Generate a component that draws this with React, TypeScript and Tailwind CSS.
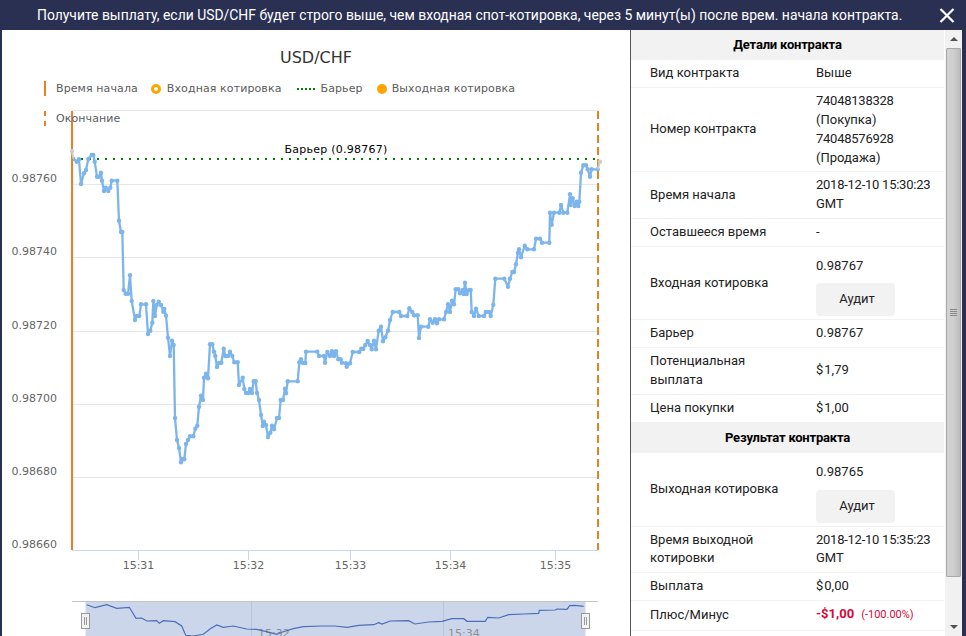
import React from 'react';

// page coordinates, read off the price line
const PRICE: [number, number][] = [
  [73.3,158.7],[76.7,161.7],[79,159.3],[81,184],[84,173.3],[86,170],[88.3,159],[91.7,155],[93.3,155],[94.7,161.7],[97,176.7],[99,176.7],[101,172.7],[102,180.7],[104,191],[105.7,187.7],[108.3,191],[110.3,187.7],[111.7,180.7],[117.3,180.7],[119,220.7],[121,232],[122.3,232],[123.7,290],[125.7,293.7],[128,293.7],[130,275.3],[131.7,301],[135,320],[136.7,316],[139.3,316],[141,304.3],[146,304.3],[148,334],[150.3,330.7],[152.3,322.7],[153.3,301],[155,316],[156.7,305],[158.7,301.7],[161,305],[163.3,311.7],[164.3,309],[166,315.7],[168,337.7],[170,356],[172,340.7],[173.7,345],[175,418],[177,440],[179,448],[181,462.3],[182.3,459.3],[184.3,459.3],[186,444],[188,440],[190,436.3],[193.3,436.3],[195.3,428.7],[197.3,425.7],[199,406.7],[201,395.7],[203,400],[204,377.7],[206,373.7],[208,378.3],[210,344.3],[212.3,344.3],[214,351.7],[215.3,356],[217,367],[219,363],[221.3,362.7],[223.7,348.7],[225.3,356],[228,356],[230,351.7],[232.3,356],[234.3,362.3],[237.7,362.3],[239,385],[242.7,377.7],[244.3,389],[246,393],[248.3,393],[250,389],[252,393],[253.7,381.3],[255.7,381.3],[257,393],[259,400],[261,415],[262.7,426],[264,421.7],[266,425],[268,437],[270.3,432.7],[272,425.7],[274,429.3],[277,418],[279,418],[280.7,400],[283,400],[285,388.7],[286,393.3],[287.7,381.3],[297.7,381.3],[299.3,362.3],[301,359.3],[303,363],[305.3,363],[306,351.7],[317.3,351.7],[319,356],[324,356],[325,362.7],[327.3,352],[330,356],[332,351.3],[334,356],[336,351.3],[338.3,359.3],[340.7,359.3],[342,362.7],[346,363.3],[346.7,366.7],[350,363.3],[352.7,352],[359.3,352],[361.3,348.7],[363.3,348.7],[365.3,345],[367.7,341],[370,345],[371.7,349.3],[374,340.7],[376,349.3],[378.7,330.7],[381,326.7],[383,341.3],[385.3,337.3],[388,330.7],[390,320],[392.7,312],[399.3,312],[401,316],[407.3,316],[409.3,308.3],[412.3,312],[414,315.3],[417.7,315.3],[419,338],[421,326.7],[428.3,326.7],[430,319.3],[432.7,322.7],[435,319.3],[437,323.3],[439,319.3],[444,319.3],[446,312],[448,304.3],[450,312],[452,300.7],[454,304.3],[455.7,289.3],[458.3,289.3],[460,293.3],[462.7,290],[463.7,294],[465,282.7],[466.7,294],[469,290],[470.7,290],[471.7,312],[474,316],[476,308.7],[478.7,316],[484,316],[485.7,312],[489,312],[490.7,316],[493.3,304.7],[495.3,278.7],[504.3,278.7],[508,286.7],[510,278.7],[512.3,272],[514,272],[516,264.3],[518,252.7],[519,249.3],[521,257.3],[524.7,245.7],[527.3,249.3],[534,249.3],[536,238.7],[540,238.7],[542,242.7],[549.3,242.7],[550,212.7],[551.7,224.7],[554,212.7],[559.3,212.7],[561,205],[563.3,212.7],[567.3,212.7],[570,194.3],[570.7,205],[572.7,198.3],[574.7,206],[576.7,201.7],[578.3,206],[579.3,201.7],[581,172.7],[583.3,165.3],[586,165.3],[587.7,169.3],[590,176.7],[591.7,169.3],[597.7,169.3],
];

const NAVIGATOR =
  '86.7,604.7 95,607.7 106.7,604.7 116.7,608.3 129.3,607.3 136,618.3 141.7,618 146.7,621 156.7,620.7 159.3,623.3 163.3,620.7 175,621.7 181.7,626 185.7,635.3 193,636 203.3,634.3 210,629 216.7,625 223.3,627.3 233.3,626 246.7,629 256.7,629.3 266.7,631.7 276.7,634.3 283.3,631.7 293.3,628.7 303.3,626.7 322,626 335,626 347,627.3 358.7,625.3 373.7,624.7 378.7,622.7 382,624 390.3,621 408.7,620.7 414.7,624 428.7,622 442,621.3 452,618.7 463.7,618.7 467,621.3 485.3,621.3 487.7,617.3 498.7,618 508.7,614.7 523.7,614 538.7,613.3 539.3,610.3 555.3,610 557,609 567,609.3 569.7,605.7 575.3,605.3 583.7,606.3';

const GRID = [110.5, 184.5, 257.5, 331.5, 404.5, 477.5];
const Y_LABELS: [string, number][] = [
  ['0.98760', 182],
  ['0.98740', 255],
  ['0.98720', 329],
  ['0.98700', 402],
  ['0.98680', 475],
  ['0.98660', 548],
];
const X_TICKS: [string, number][] = [
  ['15:31', 138.5],
  ['15:32', 248.5],
  ['15:33', 350.5],
  ['15:34', 450.5],
  ['15:35', 555.5],
];

const chartFont = { fontFamily: '"DejaVu Sans", sans-serif' };

const Chart = () => (
  <svg className="block" width={628} height={530} viewBox="2 106 628 530" style={chartFont}>
    {GRID.map((y) => (
      <line key={y} x1={72} x2={598} y1={y} y2={y} stroke="#e6e6e6" />
    ))}
    {Y_LABELS.map(([t, y]) => (
      <text key={t} x={57} y={y} textAnchor="end" fontSize={11} fill="#666666">{t}</text>
    ))}
    <line x1={72} x2={598} y1={550.5} y2={550.5} stroke="#ccd6eb" />
    {X_TICKS.map(([t, x]) => (
      <g key={t}>
        <line x1={x} x2={x} y1={550} y2={560} stroke="#ccd6eb" />
        <text x={x} y={569} textAnchor="middle" fontSize={11} fill="#666666">{t}</text>
      </g>
    ))}

    {/* barrier */}
    <line x1={73} x2={598} y1={159} y2={159} stroke="#008000" strokeWidth={2} strokeDasharray="2 6" />
    <text x={336} y={153} textAnchor="middle" fontSize={11} letterSpacing={0.25} fill="#000000">Барьер (0.98767)</text>

    {/* price */}
    <polyline points={PRICE.map((p) => p.join(',')).join(' ')} fill="none" stroke="#7cb5ec" strokeWidth={2.3} strokeLinejoin="round" />
    {PRICE.map(([x, y], i) => (
      <circle key={i} cx={x} cy={y} r={2.2} fill="#7cb5ec" />
    ))}

    {/* start, end */}
    <line x1={72} x2={72} y1={111} y2={550} stroke="#e98024" strokeWidth={2} />
    <line x1={598} x2={598} y1={111} y2={550} stroke="#e98024" strokeWidth={2} strokeDasharray="8 4" />

    {/* grey ends sit over the markers */}
    <polyline points="72,151 73.3,158.7" fill="none" stroke="#cccccc" strokeWidth={2} />
    <polyline points="597.7,169.3 600,161.7" fill="none" stroke="#cccccc" strokeWidth={2} />
    <circle cx={72} cy={151} r={2.2} fill="#cccccc" />
    <circle cx={600} cy={161.7} r={2.2} fill="#cccccc" />

    {/* navigator */}
    <rect x={85.5} y={601} width={500} height={35} fill="#ccd6eb" />
    <line x1={72} x2={598} y1={601.5} y2={601.5} stroke="#c4c4c4" />
    <line x1={251.5} x2={251.5} y1={602} y2={636} stroke="#b8c3da" />
    <line x1={443.5} x2={443.5} y1={602} y2={636} stroke="#b8c3da" />
    <text x={258} y={637} fontSize={11} fill="#8f8f8f">15:32</text>
    <text x={448} y={637} fontSize={11} fill="#8f8f8f">15:34</text>
    <polyline points={NAVIGATOR} fill="none" stroke="#4a6fb8" strokeWidth={1.2} />
    {[85.5, 585.5].map((x) => (
      <g key={x}>
        <rect x={x - 4} y={613.5} width={8} height={15} fill="#f2f2f2" stroke="#999999" />
        <line x1={x - 1} x2={x - 1} y1={617} y2={625} stroke="#999999" />
        <line x1={x + 1} x2={x + 1} y1={617} y2={625} stroke="#999999" />
      </g>
    ))}
  </svg>
);

const LegendItem = ({ marker, label, className }: { marker: React.ReactNode; label: string; className: string }) => (
  <div className={`flex items-center h-[15px] mb-[15px] ${className}`}>
    {marker}
    <span className="text-[11px] tracking-[0.1px] text-[#5c5c5c] leading-none whitespace-nowrap">{label}</span>
  </div>
);

const Row = ({ label, className, children }: { label: string; className?: string; children: React.ReactNode }) => (
  <div className={`grid grid-cols-[185px_1fr] items-center border-b border-[#f2f2f2] ${className ?? 'py-1'}`}>
    <div className="pl-[19px] pr-[35px]">{label}</div>
    <div>{children}</div>
  </div>
);

const AuditRow = ({ label, value, className }: { label: string; value: string; className: string }) => (
  <div className="grid grid-cols-[185px_1fr] items-center border-b border-[#f2f2f2]">
    <div className="pl-[19px] pr-[35px]">{label}</div>
    <div className={`pt-[10px] ${className}`}>
      <div>{value}</div>
      <button className="mt-[7.5px] w-[79px] h-[33px] pl-[3px] rounded bg-[#f2f2f2] text-[13px] text-[#222222]">Аудит</button>
    </div>
  </div>
);

const SectionTitle = ({ className, children }: { className: string; children: React.ReactNode }) => (
  <div className={`bg-[#f2f2f2] flex items-center justify-center font-bold text-black tracking-[-0.2px] ${className}`}>{children}</div>
);

const Money = ({ v }: { v: string }) => (
  <span>
    <span className="mr-px">$</span>
    {v}
  </span>
);

const Scrollbar = () => (
  <div className="w-[17px] h-full bg-[#f1f1f1] flex flex-col">
    <div className="h-[18px] flex items-center justify-center">
      <div className="w-0 h-0 border-x-[4px] border-x-transparent border-b-[4px] border-b-[#505050]" />
    </div>
    <div className="h-[529px] mx-px rounded-[1px] border border-[#a8a8a8] bg-gradient-to-r from-[#d2d2d2] via-[#cfcfcf] to-[#bcbcbc] flex flex-col items-center justify-center gap-px">
      <div className="w-[7px] h-px bg-[#8a8a8a]" />
      <div className="w-[7px] h-px bg-[#8a8a8a]" />
      <div className="w-[7px] h-px bg-[#8a8a8a]" />
      <div className="w-[7px] h-px bg-[#8a8a8a]" />
    </div>
    <div className="flex-1 flex items-end justify-center pb-[7px]">
      <div className="w-0 h-0 border-x-[4px] border-x-transparent border-t-[4px] border-t-[#505050]" />
    </div>
  </div>
);

export default function App() {
  return (
    <div className="w-[966px] h-[636px] bg-[#2a3052] flex flex-col overflow-hidden" style={{ fontFamily: 'Roboto, sans-serif' }}>
      <div className="h-[30px] shrink-0 flex items-center text-white text-[13.91px] relative pl-[37px]">
        <span className="whitespace-nowrap">
          Получите выплату, если USD/CHF будет строго выше, чем входная спот-котировка, через 5 минут(ы) после врем. начала контракта.
        </span>
        <svg className="absolute left-[939px] top-[8px]" width={16} height={15} viewBox="0 0 16 15">
          <path d="M1.5 1 L14.5 14 M14.5 1 L1.5 14" stroke="#ffffff" strokeWidth={2.2} fill="none" />
        </svg>
      </div>

      <div className="flex flex-1 min-h-0 pl-[2px] pr-[4px]">
        <div className="w-[628px] bg-white relative overflow-hidden">
          <div className="h-[51px] pt-[17px] text-center text-[16px] leading-[22px] text-[#333333]" style={chartFont}>USD/CHF</div>
          <div className="relative z-10 h-[25px] pl-[42px] flex flex-wrap w-[530px]" style={chartFont}>
            <LegendItem className="mr-[13px]" marker={<div className="w-[2px] h-[15px] bg-[#e98024] mr-[10px]" />} label="Время начала" />
            <LegendItem className="mr-[15px]" marker={<div className="w-[10px] h-[10px] rounded-full border-[3px] border-[#ffa500] bg-white mr-[6px]" />} label="Входная котировка" />
            <LegendItem className="mr-[14px]" marker={<div className="w-[18px] border-t-2 border-dotted border-[#008000] mr-[6px]" />} label="Барьер" />
            <LegendItem className="mr-[14px]" marker={<div className="w-[10px] h-[10px] rounded-full bg-[#ffa500] mr-[5px]" />} label="Выходная котировка" />
            <LegendItem
              className="mr-[14px]"
              marker={
                <div className="w-[2px] h-[15px] mr-[10px] flex flex-col justify-between">
                  <div className="h-[5px] bg-[#e98024]" />
                  <div className="h-[5px] bg-[#e98024]" />
                </div>
              }
              label="Окончание"
            />
          </div>
          <Chart />
        </div>

        <div className="w-[332px] border-l border-[#555555] flex bg-white">
          <div className="w-[314px] text-[13px] leading-[18.75px] text-[#222222]">
            <SectionTitle className="h-[30px]">Детали контракта</SectionTitle>
            <Row label="Вид контракта" className="pt-[3.5px] pb-[5px]">Выше</Row>
            <Row label="Номер контракта"><span className="tracking-[-0.25px]">74048138328</span> (Покупка) <span className="tracking-[-0.25px]">74048576928</span> (Продажа)</Row>
            <Row label="Время начала"><span className="tracking-[-0.25px]">2018-12-10 15:30:23</span> GMT</Row>
            <Row label="Оставшееся время">-</Row>
            <AuditRow label="Входная котировка" value="0.98767" className="pb-[3.5px]" />
            <Row label="Барьер">0.98767</Row>
            <Row label="Потенциальная выплата"><Money v="1,79" /></Row>
            <Row label="Цена покупки" className="py-[4.25px]"><Money v="1,00" /></Row>
            <SectionTitle className="h-[30.5px]">Результат контракта</SectionTitle>
            <AuditRow label="Выходная котировка" value="0.98765" className="pb-[3px]" />
            <Row label="Время выходной котировки"><span className="tracking-[-0.25px]">2018-12-10 15:35:23</span> GMT</Row>
            <Row label="Выплата"><Money v="0,00" /></Row>
            <Row label="Плюс/Минус" className="py-[4.5px]">
              <span className="font-bold text-[#d6083b]">-$1,00</span>
              <span className="ml-[7px] text-[11px] text-[#d6083b]">(-100.00%)</span>
            </Row>
          </div>
          <div className="w-px" />
          <Scrollbar />
        </div>
      </div>
    </div>
  );
}
